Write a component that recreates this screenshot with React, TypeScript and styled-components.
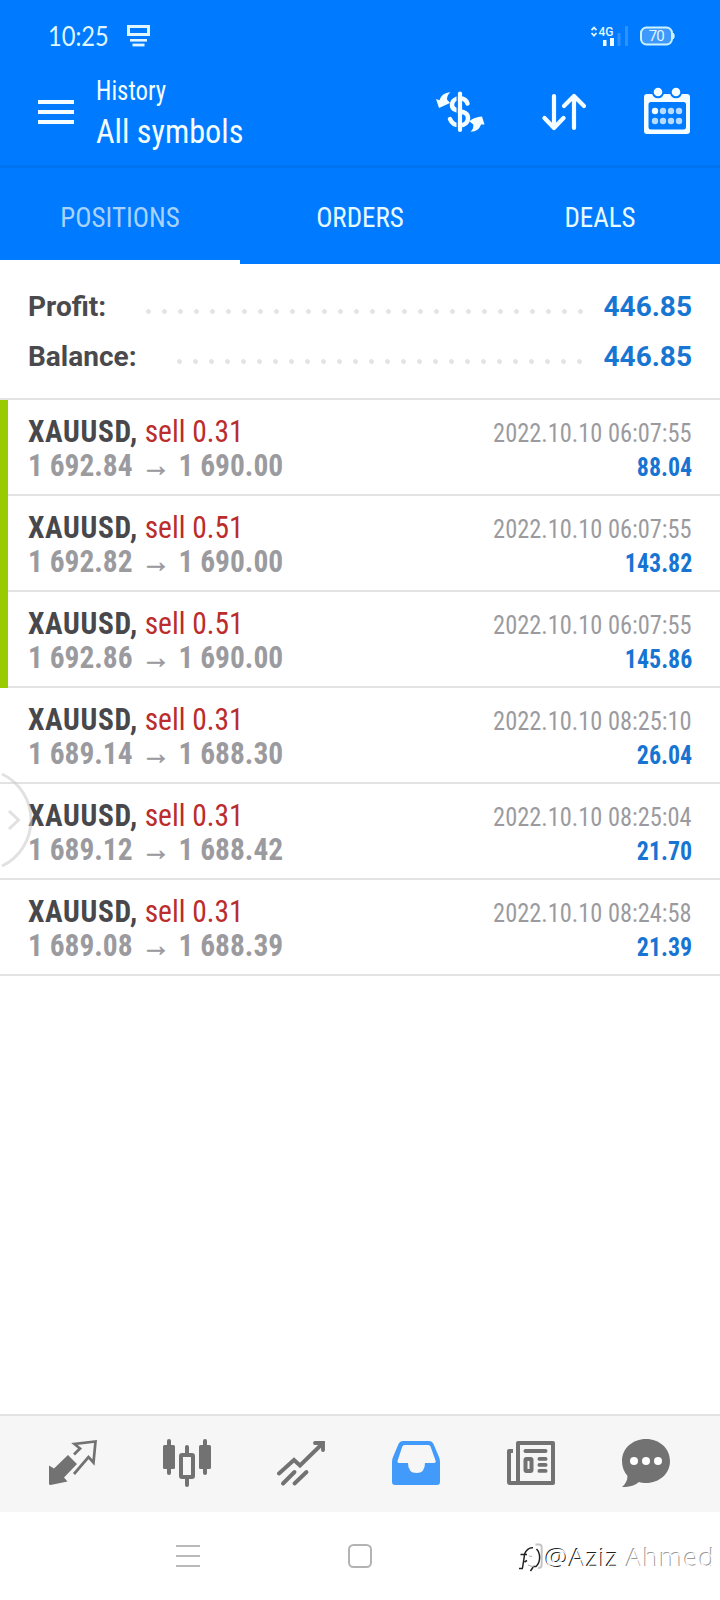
import React from 'react';
import styled, { createGlobalStyle } from 'styled-components';

const condensed = '"Roboto Condensed", Roboto, "Liberation Sans", sans-serif';

const GlobalStyle = createGlobalStyle`
  * { box-sizing: border-box; }
  body { margin: 0; background: #fff; }
`;

const Screen = styled.div`
  position: relative;
  display: flex;
  flex-direction: column;
  width: 720px;
  height: 1600px;
  overflow: hidden;
  background: #fff;
  font-family: ${condensed};
  white-space: nowrap;
`;

const StatusBar = styled.div`
  display: flex;
  align-items: center;
  height: 70px;
  padding: 2px 45px 0 48px;
  background: #007aff;
  color: #dff6ff;
`;

const Clock = styled.span`
  width: 79px;
  font: 400 26px/36px Lato, sans-serif;
  transform: scaleX(0.91);
  transform-origin: left;
`;

const StatusIcons = styled.div`
  display: flex;
  align-items: center;
  gap: 12px;
  margin-left: auto;
`;

const Toolbar = styled.header`
  display: flex;
  align-items: flex-start;
  height: 98px;
  padding: 0 30px 0 38px;
  background: #007aff;
  border-bottom: 3px solid #0073f0;
  color: #f4fdff;
`;

const MenuButton = styled.div`
  display: flex;
  flex-direction: column;
  gap: 6px;
  width: 36px;
  margin: 30px 22px 0 0;
`;

const MenuBar = styled.span`
  height: 4px;
  background: #f4fdff;
`;

const Titles = styled.div`
  display: flex;
  flex-direction: column;
  padding-top: 5px;
`;

const Overline = styled.span`
  font-size: 27px;
  line-height: 32px;
  transform: scaleX(0.92);
  transform-origin: left;
`;

const Title = styled.span`
  margin-top: 2px;
  font-size: 34px;
  line-height: 44px;
  transform: scaleX(0.948);
  transform-origin: left;
`;

const Actions = styled.div`
  display: flex;
  gap: 56px;
  margin: 16px 0 0 auto;
`;

const Tabs = styled.nav`
  display: grid;
  grid-template-columns: repeat(3, 1fr);
  height: 96px;
  background: #007aff;
`;

const Tab = styled.div<{ $active?: boolean }>`
  display: flex;
  align-items: center;
  justify-content: center;
  padding-top: ${p => (p.$active ? 8 : 4)}px;
  border-bottom: ${p => (p.$active ? '4px solid #fff' : 'none')};
  color: ${p => (p.$active ? '#a9d2f8' : '#e6fbff')};
  font-size: 27px;
  line-height: 36px;
`;

const Summary = styled.section`
  height: 136px;
  padding: 17px 28px 0;
  border-bottom: 2px solid #e3e3e3;
`;

const SummaryRow = styled.div`
  display: flex;
  align-items: center;
  height: 50px;
  font-family: Roboto, sans-serif;
  font-weight: 700;
  font-size: 28px;
`;

const SummaryLabel = styled.span`
  color: #4a4a4d;
`;

const Leader = styled.span`
  flex: 1;
  height: 5px;
  margin: 10px 21px 0 40px;
  background: radial-gradient(circle at 2.5px 2.5px, #e4e4e4 2px, transparent 2.8px) 0 0 / 16px 5px repeat-x;
`;

const SummaryValue = styled.span`
  color: #1876d3;
`;

const PositionRow = styled.article<{ $marked: boolean }>`
  display: flex;
  height: 96px;
  &::before {
    content: '';
    width: 8px;
    background: ${p => (p.$marked ? '#99cc00' : 'transparent')};
    border-bottom: ${p => (p.$marked ? 'none' : '2px solid #e3e3e3')};
  }
`;

const PositionBody = styled.div`
  display: flex;
  flex: 1;
  justify-content: space-between;
  padding: 14px 28px 0 20px;
  border-bottom: 2px solid #e3e3e3;
`;

const Column = styled.div<{ $end?: boolean }>`
  display: flex;
  flex-direction: column;
  align-items: ${p => (p.$end ? 'flex-end' : 'flex-start')};
  padding-top: ${p => (p.$end ? 2 : 0)}px;
  line-height: 34px;
`;

const Instrument = styled.div`
  color: #bb2c2c;
  font-size: 32px;
  transform: scaleX(0.92);
  transform-origin: left;
`;

const SymbolName = styled.b`
  color: #48484c;
  letter-spacing: 0.7px;
`;

const Prices = styled.div`
  color: #9b9b9f;
  font-size: 32px;
  font-weight: 700;
  transform: scaleX(0.92);
  transform-origin: left;
`;

const Arrow = styled.span`
  margin: 0 1.5px 0 1.7px;
  font-weight: 400;
  -webkit-text-stroke: 0.6px #9b9b9f;
`;

const Time = styled.span`
  color: #9b9b9f;
  font-size: 26px;
  transform: scaleX(0.938);
  transform-origin: right;
`;

const Profit = styled.span`
  color: #1874d2;
  font-size: 26px;
  font-weight: 700;
  transform: scaleX(0.92);
  transform-origin: right;
`;

const Blank = styled.div`
  flex: 1;
`;

const BottomBar = styled.nav`
  display: grid;
  grid-template-columns: 114px 114px 115px 115px 115px 48px;
  height: 98px;
  padding: 23px 0 0 49px;
  border-top: 2px solid #e2e2e2;
  background: #f6f6f6;
`;

const SystemBar = styled.div`
  display: flex;
  align-items: center;
  height: 88px;
  padding: 0 0 0 176px;
  gap: 148px;
`;

const EdgeHandle = styled.svg`
  position: absolute;
  left: 0;
  top: 770px;
`;

const Watermark = styled.div`
  position: absolute;
  left: 516px;
  top: 1538px;
  display: flex;
  align-items: center;
  height: 38px;
  color: #fff;
  font: 300 26.5px/38px "Noto Sans", sans-serif;
  letter-spacing: 0.65px;
`;

const Etched = styled.span<{ $shade: string }>`
  text-shadow: -1px -1px 0 ${p => p.$shade};
`;

const positions = [
  { lots: '0.31', open: '1 692.84', close: '1 690.00', time: '2022.10.10 06:07:55', profit: '88.04', marked: true },
  { lots: '0.51', open: '1 692.82', close: '1 690.00', time: '2022.10.10 06:07:55', profit: '143.82', marked: true },
  { lots: '0.51', open: '1 692.86', close: '1 690.00', time: '2022.10.10 06:07:55', profit: '145.86', marked: true },
  { lots: '0.31', open: '1 689.14', close: '1 688.30', time: '2022.10.10 08:25:10', profit: '26.04', marked: false },
  { lots: '0.31', open: '1 689.12', close: '1 688.42', time: '2022.10.10 08:25:04', profit: '21.70', marked: false },
  { lots: '0.31', open: '1 689.08', close: '1 688.39', time: '2022.10.10 08:24:58', profit: '21.39', marked: false },
];

const AppBadge = () => (
  <svg width="23" height="23" viewBox="0 0 23 23" fill="#dff6ff">
    <path d="M0 0H23V11H0ZM3 3V8H20V3Z" fillRule="evenodd" />
    <rect x="3" y="14" width="17" height="2.6" />
    <rect x="5.5" y="18.6" width="12" height="2.8" />
  </svg>
);

const Signal = () => (
  <svg width="38" height="24" viewBox="0 0 38 24">
    <path d="M1.5 6.2L4 3.6L6.5 6.2M1.5 9L4 11.6L6.5 9" fill="none" stroke="#dff6ff" strokeWidth="1.8" />
    <text x="8.5" y="12" fontFamily="Roboto, sans-serif" fontSize="13" fontWeight="500" textLength="15" lengthAdjust="spacingAndGlyphs" fill="#dff6ff">4G</text>
    <rect x="13" y="16" width="3.5" height="6" fill="#effbff" />
    <rect x="20" y="14" width="4" height="8" fill="#effbff" />
    <rect x="27.5" y="9" width="3" height="13" fill="#2f91ff" />
    <rect x="35" y="2" width="3" height="20" fill="#2f91ff" />
  </svg>
);

const Battery = () => (
  <svg width="35" height="20" viewBox="0 0 35 20">
    <rect x="1" y="1.5" width="31" height="17" rx="5.5" fill="#3f98fb" stroke="#c9f3ff" strokeWidth="2" />
    <path d="M33 7C34.6 7.5 34.6 12.5 33 13Z" fill="#c9f3ff" stroke="#c9f3ff" />
    <text x="8.8" y="15.2" fontFamily="Roboto, sans-serif" fontSize="15" textLength="16" fill="#dff6ff">70</text>
  </svg>
);

const DollarCycle = () => (
  <svg width="50" height="50" viewBox="1 0 50 50" fill="none" stroke="#f4fdff">
    <path d="M32.5 17.5C31 13.5 28 12.3 25 12.3C20.500 12.3 17 15 17 19C17 28 33 22.5 33 32C33 36.5 29.5 39.3 25 39.3C20 39.3 16.5 37 15 33" strokeWidth="4.500" strokeLinecap="round" />
    <path d="M22.200 7.5V44" stroke="#007aff" strokeWidth="1.400" />
    <path d="M25 7.5V44" strokeWidth="4.200" strokeLinecap="round" />
    <path d="M15.5 6.2C13 8 12 10.5 12 13.5L15 17L4 22L1 13L4.5 14.3C6 9.5 9.5 6.5 15.5 6.2Z" fill="#f4fdff" stroke="none" />
    <path d="M35.5 45.8C38 43.5 38.5 41.5 38.3 38.5L34.5 35.5C36.5 33 40.5 31 47 30.5L49.5 38.5L46 38.5C44.5 43 41.5 45.5 35.5 45.8Z" fill="#f4fdff" stroke="none" />
  </svg>
);

const SortArrows = () => (
  <svg width="46" height="50" viewBox="1 0 46 50" fill="none" stroke="#f4fdff" strokeWidth="4.200" strokeLinecap="round" strokeLinejoin="round">
    <path d="M13 10V42M3.5 32L13 42L22.5 32" />
    <path d="M33 42V10M23 20L33 10L43 20" />
  </svg>
);

const Calendar = () => (
  <svg width="46" height="50" viewBox="0 0 46 50">
    <path d="M3 8H43Q46 8 46 11V45Q46 48 43 48H3Q0 48 0 45V11Q0 8 3 8ZM7 16Q4.5 16 4.5 18.5V41Q4.5 43.5 7 43.5H39.5Q42 43.5 42 41V18.5Q42 16 39.5 16Z" fill="#f4fdff" fillRule="evenodd" />
    {[14, 32].map(x => (
      <circle key={x} cx={x} cy="6" r="5.3" fill="#f4fdff" stroke="#007aff" strokeWidth="2" />
    ))}
    {[25, 35].map(y => [11, 19, 27, 35].map(x => (
      <circle key={`${x}-${y}`} cx={x} cy={y} r="3.2" fill={x === 11 && y === 25 ? '#f4fdff' : '#b5dcff'} />
    )))}
  </svg>
);

const NavIcon = ({ children }: { children: React.ReactNode }) => (
  <svg width="48" height="48" viewBox="0 0 48 48" fill="#727272">{children}</svg>
);

const QuotesIcon = () => (
  <NavIcon>
    <path d="M19 16L28 25L15 38.5L18.5 42.5L1.5 46Q0 46 0 44.5V26.5L5 29.5Z" />
    <path d="M25 15.5L31 9.5L25.5 5L46.5 2.5L44.5 23.5L39.5 18L25 35" fill="none" stroke="#727272" strokeWidth="2.7" />
  </NavIcon>
);

const ChartIcon = () => (
  <NavIcon>
    <rect x="4" y="0" width="4" height="36" rx="2" />
    <rect x="0" y="6" width="12" height="24" rx="1.5" />
    <rect x="40" y="0" width="4" height="36" rx="2" />
    <rect x="36" y="6" width="12" height="24" rx="1.5" />
    <rect x="22" y="6" width="4" height="42" rx="2" />
    <rect x="18" y="16" width="12" height="22" rx="1" fill="#f6f6f6" stroke="#727272" strokeWidth="4" />
  </NavIcon>
);

const TradeIcon = () => (
  <NavIcon>
    <g fill="none" stroke="#727272" strokeWidth="3.9" strokeLinecap="round" strokeLinejoin="miter">
      <path d="M2 34.5L17 21L23 26.5L44 6" />
      <path d="M38 4H46V11" />
      <path d="M6 44.5L17.5 33M17.5 44.5L29.5 33" />
    </g>
  </NavIcon>
);

const HistoryIcon = () => (
  <svg width="48" height="48" viewBox="0 0 48 48">
    <path d="M11 2H37Q40 2 41.5 5L47 18Q48 20 48 23V43Q48 46 45 46H3Q0 46 0 43V23Q0 20 1 18L6.5 5Q8 2 11 2ZM12.5 6Q11 6 10.3 7.5L5.5 22Q5 24 7 24H16Q16 34 24.5 34Q33 34 33 24H42Q44.2 24 43.7 22L38.5 7.5Q38 6 36.5 6Z" fill="#429bfa" fillRule="evenodd" />
  </svg>
);

const NewsIcon = () => (
  <NavIcon>
    <path d="M11 2H46Q48 2 48 4V44Q48 46 46 46H3Q0 46 0 43V12Q0 10 2 10H6V14H4V42H9V4Q9 2 11 2ZM13 6V42H44V6Z" fillRule="evenodd" />
    <rect x="16.5" y="10" width="24" height="4" rx="2" />
    <rect x="18.5" y="20" width="6" height="12" fill="none" stroke="#727272" strokeWidth="4" rx="1" />
    {[18, 24, 30].map(y => <rect key={y} x="30.5" y={y} width="10" height="3.8" rx="1.9" />)}
  </NavIcon>
);

const ChatIcon = () => (
  <NavIcon>
    <path d="M24 0C37.5 0 48 9.5 48 22C48 34.5 37.5 44 24 44C21.5 44 19 43.7 17 43C12 47 6 48.3 0 48C3.5 45 5.5 41.5 5.5 37C2 33 0 28 0 22C0 9.5 10.5 0 24 0Z" />
    {[12, 24, 36].map(x => <circle key={x} cx={x} cy="22" r="4" fill="#fff" />)}
  </NavIcon>
);

export default function App() {
  return (
    <Screen>
      <GlobalStyle />
      <StatusBar>
        <Clock>10:25</Clock>
        <AppBadge />
        <StatusIcons><Signal /><Battery /></StatusIcons>
      </StatusBar>
      <Toolbar>
        <MenuButton><MenuBar /><MenuBar /><MenuBar /></MenuButton>
        <Titles>
          <Overline>History</Overline>
          <Title>All symbols</Title>
        </Titles>
        <Actions><DollarCycle /><SortArrows /><Calendar /></Actions>
      </Toolbar>
      <Tabs>
        <Tab $active>POSITIONS</Tab>
        <Tab>ORDERS</Tab>
        <Tab>DEALS</Tab>
      </Tabs>
      <Summary>
        {['Profit:', 'Balance:'].map(label => (
          <SummaryRow key={label}>
            <SummaryLabel>{label}</SummaryLabel>
            <Leader />
            <SummaryValue>446.85</SummaryValue>
          </SummaryRow>
        ))}
      </Summary>
      {positions.map(p => (
        <PositionRow key={p.open} $marked={p.marked}>
          <PositionBody>
            <Column>
              <Instrument><SymbolName>XAUUSD,</SymbolName> sell {p.lots}</Instrument>
              <Prices>{p.open} <Arrow>→</Arrow> {p.close}</Prices>
            </Column>
            <Column $end>
              <Time>{p.time}</Time>
              <Profit>{p.profit}</Profit>
            </Column>
          </PositionBody>
        </PositionRow>
      ))}
      <Blank />
      <BottomBar>
        <QuotesIcon /><ChartIcon /><TradeIcon /><HistoryIcon /><NewsIcon /><ChatIcon />
      </BottomBar>
      <SystemBar>
        <svg width="24" height="24" viewBox="0 0 24 24" fill="#b9b9b9">
          <rect y="1" width="24" height="2" /><rect y="11" width="24" height="2" /><rect y="21" width="24" height="2" />
        </svg>
        <svg width="24" height="24" viewBox="0 0 24 24">
          <rect x="1" y="1" width="22" height="22" rx="4.5" fill="none" stroke="#b3b3b3" strokeWidth="2" />
        </svg>
      </SystemBar>
      <EdgeHandle width="36" height="100" viewBox="0 0 36 100" fill="none" stroke="#c8c8c8" strokeOpacity="0.55" strokeWidth="3">
        <path d="M2 4A51 51 0 0 1 2 96" />
        <path d="M9 41L18.5 50L9 59" />
      </EdgeHandle>
      <Watermark>
        <svg width="29" height="34" viewBox="0 0 29 34" fill="none">
          <path d="M19.5 4.500H23Q25.7 4.5 25.7 7.5V24.5Q25.7 28 22 28" stroke="#c4c4c4" strokeWidth="2" />
          <path d="M17 7.8C14 7.5 11 8.5 8.5 14M4.5 14.5H11M8.5 15L6.5 28M3 28.5H7M8.5 22L11 20.5M20.5 9C24.5 13 25 22 20 26.5H17.5L14.5 31" stroke="#222" strokeWidth="1.5" />
          <path d="M13 16L16 16.5M12 25L18 27" stroke="#aaa" />
        </svg>
        <Etched $shade="#222">@Aziz&nbsp;</Etched>
        <Etched $shade="#999">Ahmed</Etched>
      </Watermark>
    </Screen>
  );
}
